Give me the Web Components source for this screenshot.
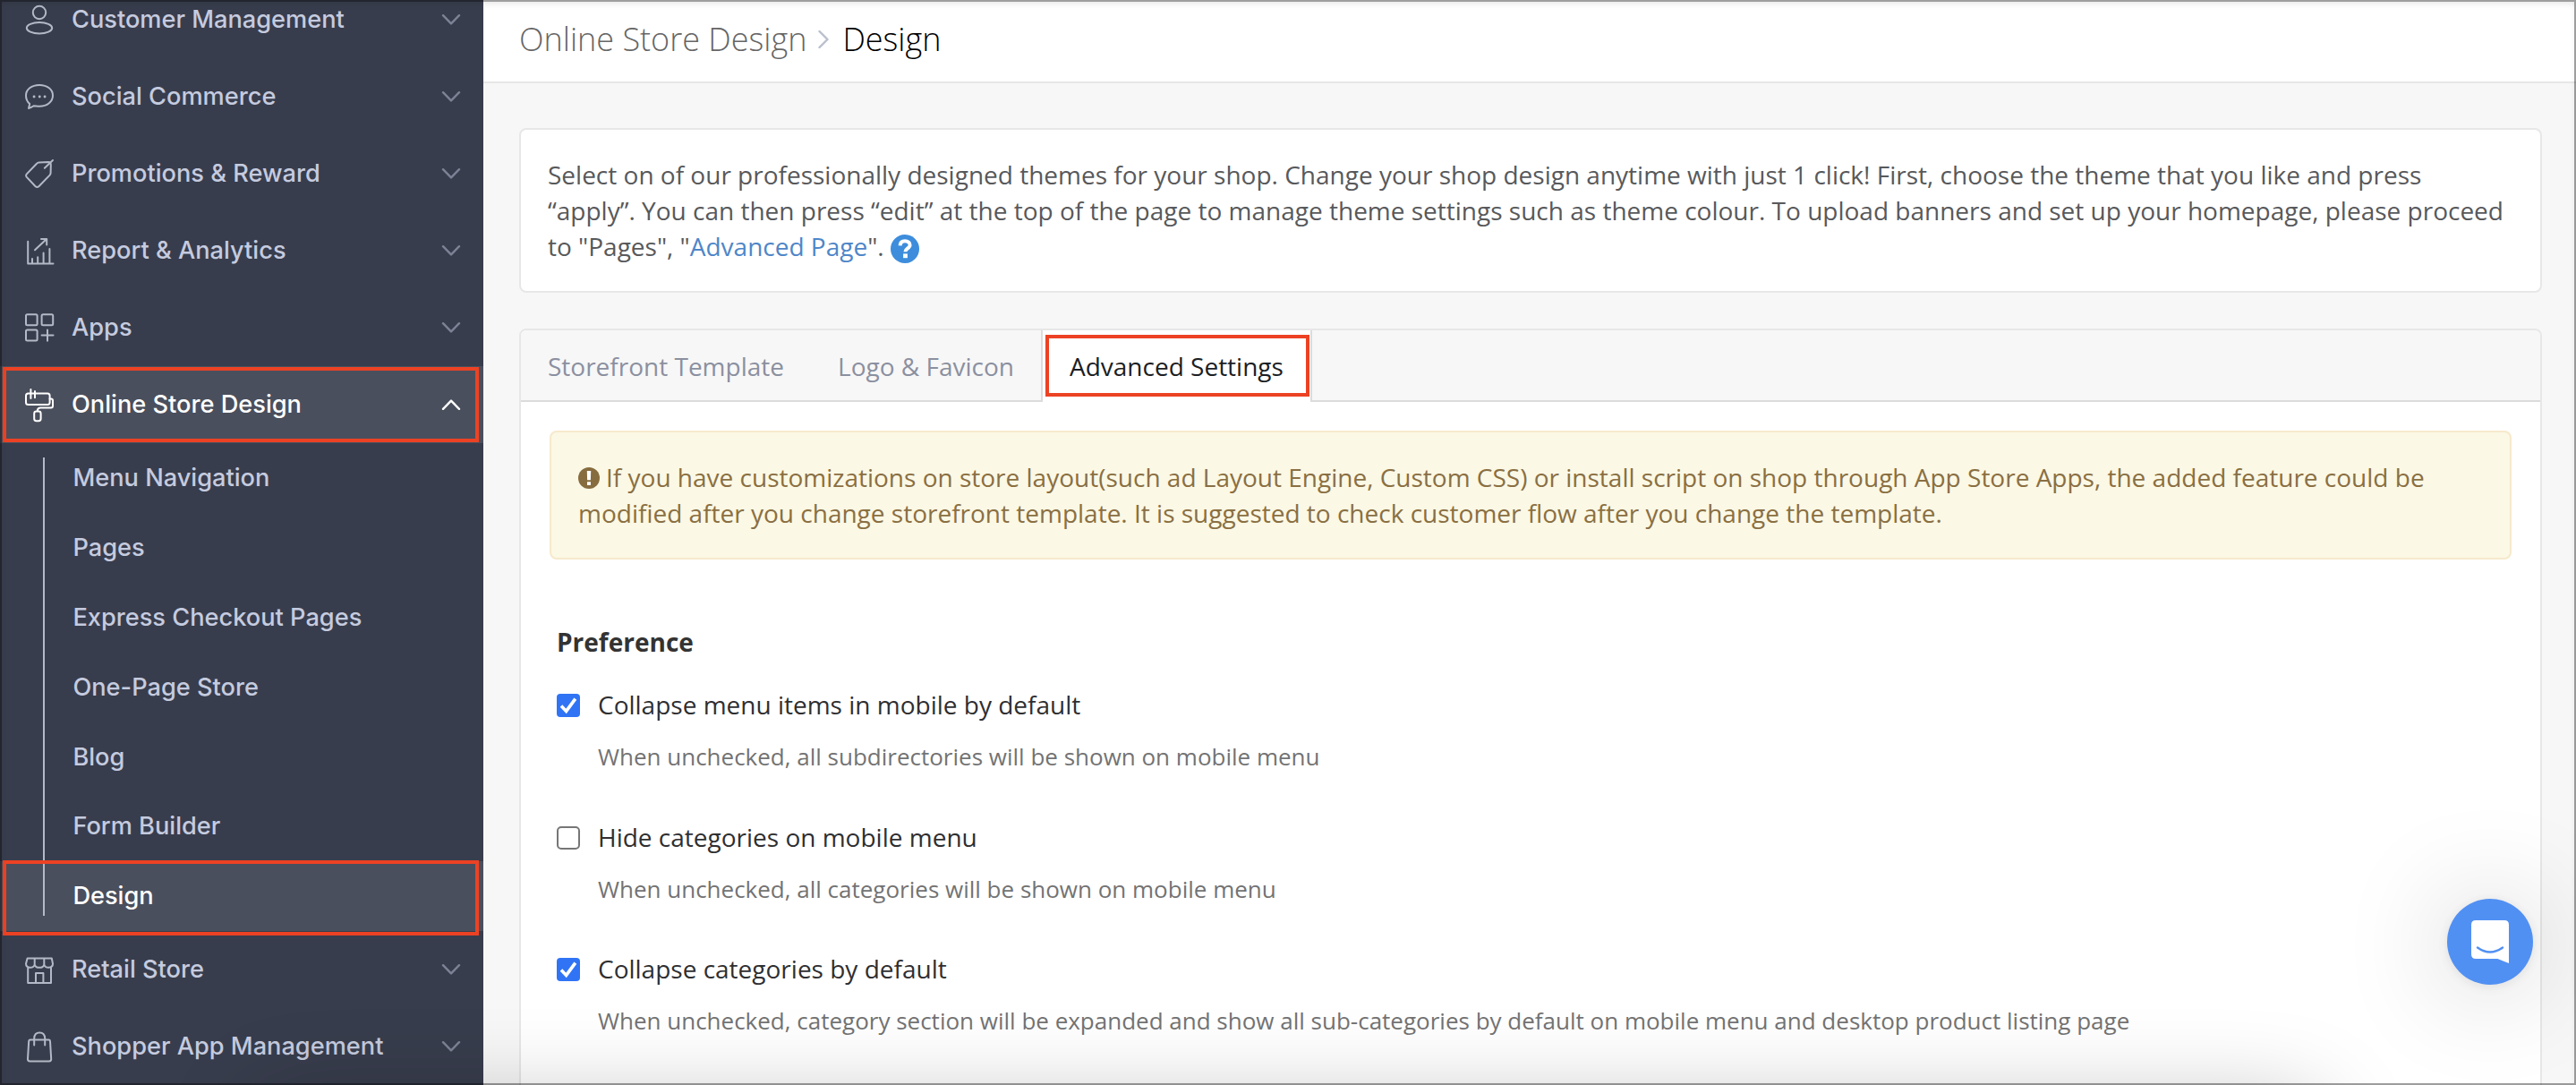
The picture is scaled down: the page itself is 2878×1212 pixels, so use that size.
<!DOCTYPE html>
<html lang="en">
<head>
<meta charset="utf-8">
<title>Design</title>
<style>
html,body{margin:0;height:100%;overflow:hidden;background:#f7f7f7}
</style>
</head>
<body>
<store-admin>
  <side-nav slot="nav">
    <nav-item icon="customer">Customer Management</nav-item>
    <nav-item icon="social">Social Commerce</nav-item>
    <nav-item icon="promo">Promotions &amp; Reward</nav-item>
    <nav-item icon="report">Report &amp; Analytics</nav-item>
    <nav-item icon="apps">Apps</nav-item>
    <nav-item icon="roller" open>Online Store Design</nav-item>
    <sub-nav>
      <sub-item>Menu Navigation</sub-item>
      <sub-item>Pages</sub-item>
      <sub-item>Express Checkout Pages</sub-item>
      <sub-item>One-Page Store</sub-item>
      <sub-item>Blog</sub-item>
      <sub-item>Form Builder</sub-item>
      <sub-item active>Design</sub-item>
    </sub-nav>
    <nav-item icon="store">Retail Store</nav-item>
    <nav-item icon="bag">Shopper App Management</nav-item>
  </side-nav>
  <crumb-bar slot="header"><span slot="parent">Online Store Design</span><span>Design</span></crumb-bar>
  <info-card></info-card>
  <tab-panel>
    <tab-item slot="tabs">Storefront Template</tab-item>
    <tab-item slot="tabs">Logo &amp; Favicon</tab-item>
    <tab-item slot="tabs" active>Advanced Settings</tab-item>
    <alert-box>If you have customizations on store layout(such ad Layout Engine, Custom CSS) or install script on shop through App Store Apps, the added feature could be modified after you change storefront template. It is suggested to check customer flow after you change the template.</alert-box>
    <pref-group heading="Preference">
      <pref-option checked>Collapse menu items in mobile by default<span slot="hint">When unchecked, all subdirectories will be shown on mobile menu</span></pref-option>
      <pref-option>Hide categories on mobile menu<span slot="hint">When unchecked, all categories will be shown on mobile menu</span></pref-option>
      <pref-option checked>Collapse categories by default<span slot="hint">When unchecked, category section will be expanded and show all sub-categories by default on mobile menu and desktop product listing page</span></pref-option>
    </pref-group>
  </tab-panel>
  <chat-button slot="float"></chat-button>
</store-admin>
<script>
const define = (name, html, setup) => customElements.define(name, class extends HTMLElement {
  connectedCallback() {
    if (this.shadowRoot) return;
    const t = document.createElement('template');
    t.innerHTML = html;
    this.attachShadow({mode: 'open'}).append(t.content.cloneNode(true));
    if (setup) setup(this, this.shadowRoot);
  }
});

const ICONS = {
  customer: '<circle cx="16" cy="12" r="7.2"/><ellipse cx="16" cy="29.3" rx="14.2" ry="6.2"/>',
  social: '<path d="M4 33L5.2 28C2.4 25.6 1 22.4 1 18.7C1 12 7.2 7 16 7S31 12 31 18.7S24.8 30.7 16 30.7C13.6 30.7 11.6 30.3 9.6 30.3C7.8 31.6 6 32.5 4 33Z"/><path d="M10 20h.1M16.2 20h.1M22 20h.1" stroke-width="2.8"/>',
  promo: '<path d="M15.5 7.6L26 7Q28.8 7 28.8 10L28.6 19Q28.6 20.4 27.6 21.6L15.6 34Q13.4 36 11.4 34L1.6 23.6Q0.4 22 1.6 20.6L13 8.8Q14 7.7 15.5 7.6Z"/><path d="M31 5L21.8 13.8"/>',
  report: '<path d="M3.2 9.8V34.6H31.5M8 29V34M14.2 27.3V34M20.6 22.6V34M27.4 18V34M11 19.2L24 7M18 7H24.2V13.6"/>',
  apps: '<rect x="1" y="5.2" width="12.6" height="12" rx="1.5"/><rect x="18.6" y="5.2" width="12.6" height="12" rx="1.5"/><rect x="1" y="22.6" width="12.6" height="12" rx="1.5"/><path d="M25 22.6V34.8M18.6 28.6H31.5"/>',
  roller: '<rect x="1" y="7.6" width="26.6" height="12.4" rx="2.5"/><path d="M6.4 3V13M11 5V12.2M27.6 13.4H29Q31 13.4 31 15.4V21.4Q31 23.4 29 23.4H17.4Q13.8 23.4 13.8 27"/><rect x="10.2" y="27.6" width="7.4" height="10.6" rx="2.4"/>',
  store: '<path d="M2.6 7.5H29.8L31 13.6C31 19 22.6 19 21.3 14.4C20 19 12 19 10.7 14.4C9.4 19 1 19 1 13.6ZM10.7 7.5V14.4M21.3 7.5V14.4M3.2 17.4V35.1H29V17.4M12 35V24H20.4V35"/>',
  bag: '<path d="M5.8 12.5H26.4Q27.9 12.5 28 14L29.2 34Q29.2 36.4 27 36.4H5.2Q3 36.4 3 34L4.2 14Q4.4 12.5 5.8 12.5ZM10.2 18.4V10.6Q10.6 4.4 16.2 4.4T22.2 10.6V18.4"/>'
};

define('store-admin', `<style>
:host{display:flex;position:relative;width:2878px;height:1212px;overflow:hidden;background:#f7f7f7;font:28px/40px "Open Sans",sans-serif}
.main{flex:1;min-width:0;display:flex;flex-direction:column}
.body{display:flex;flex-direction:column;gap:40px;padding:50px 38px 0 40px}
.shade{position:absolute;z-index:4;left:285px;width:2310px;top:1232px;height:300px;border-radius:40px;box-shadow:0 0 100px rgba(0,0,0,.25);pointer-events:none}
.frame{position:absolute;z-index:5;inset:0;border:2px solid rgba(0,0,0,.38);box-shadow:inset 0 4px 8px -3px rgba(0,0,0,.12);pointer-events:none}
</style><slot name="nav"></slot><div class="main"><slot name="header"></slot><div class="body"><slot></slot></div></div><slot name="float"></slot><div class="shade"></div><div class="frame"></div>`);

define('side-nav', `<style>
:host{display:flex;flex-direction:column;flex:none;width:540px;height:1233px;margin-top:-21px;background:#383d4d;font:450 27.2px/40px Inter,"Liberation Sans",sans-serif;color:#c5cbdf}
</style><slot></slot>`);

define('nav-item', `<style>
:host{display:flex;align-items:center;flex:none;position:relative;height:86px;padding:0 26px 0 28px;box-sizing:border-box}
:host([open]){background:#4a4f5d;color:#fff}
.ic{width:32px;height:40px;margin-right:20px;flex:none;overflow:visible;fill:none;stroke:#b3b9c6;stroke-width:2;stroke-linejoin:round;stroke-linecap:round}
.label{flex:1}
.ch{width:20px;height:12px;flex:none;overflow:visible;fill:none;stroke:#7c8395;stroke-width:2.4;stroke-linecap:round;stroke-linejoin:round}
:host([open]) svg{stroke:#fff}
:host([open]) .ch{transform:scaleY(-1)}
.mark{display:none;position:absolute;left:3px;right:5px;top:1px;bottom:1px;box-sizing:border-box;border:4px solid #ec4224}
:host([open]) .mark{display:block}
</style><svg class="ic" viewBox="0 0 32 40"></svg><span class="label"><slot></slot></span><svg class="ch" viewBox="0 0 20 12"><path d="M1 1.2L10 10.4L19 1.2"/></svg><div class="mark"></div>`,
(el, root) => { root.querySelector('.ic').innerHTML = ICONS[el.getAttribute('icon')]; });

define('sub-nav', `<style>
:host{display:flex;flex-direction:column;position:relative;flex:none}
.rail{position:absolute;z-index:1;left:48px;width:2px;top:16px;bottom:17px;background:#b5bac7}
</style><slot></slot><div class="rail"></div>`);

define('sub-item', `<style>
:host{display:flex;align-items:center;position:relative;height:77.9px;padding-left:81.4px}
:host([active]){background:#4a4f5d;color:#fff}
.mark{display:none;position:absolute;z-index:2;left:3px;right:5px;top:-1px;height:84px;box-sizing:border-box;border:4px solid #ec4224}
:host([active]) .mark{display:block}
</style><slot></slot><div class="mark"></div>`);

define('crumb-bar', `<style>
:host{display:flex;align-items:center;flex:none;height:93px;box-sizing:border-box;border-bottom:2px solid #e7e7e7;background:#fff;padding:0 40px 4px;font-size:36px;font-weight:300;color:#000}
.parent{color:#666}
svg{width:12px;height:20px;margin:0 15px 0 13px;fill:none;stroke:#b9bfcd;stroke-width:2.4;stroke-linecap:round;stroke-linejoin:round}
</style><span class="parent"><slot name="parent"></slot></span><svg viewBox="0 0 12 20"><path d="M1.5 1L10.5 10L1.5 19"/></svg><slot></slot>`);

define('info-card', `<style>
:host{display:block;background:#fff;border:2px solid #e7e7e7;border-radius:8px;padding:30px 40px 30px 30px;color:#58595b}
a{color:#4f86c8}
svg{width:32px;height:32px;vertical-align:middle;margin:-6px 0 -4px 0}
</style>Select on of our professionally designed themes for your shop. Change your shop design anytime with just 1 click! First, choose the theme that you like and press “apply”. You can then press “edit” at the top of the page to manage theme settings such as theme colour. To upload banners and set up your homepage, please proceed to "Pages", "<a>Advanced Page</a>". <svg viewBox="0 0 32 32"><circle cx="16" cy="16" r="16" fill="#3d8ddc"/><path d="M10.6 12.4C10.8 9 13 7.3 16.1 7.3C19.4 7.3 21.6 9.2 21.6 12C21.6 15.4 16.4 15.6 16.4 19.3" fill="none" stroke="#fff" stroke-width="4"/><rect x="14.1" y="21.4" width="4.8" height="4.8" fill="#fff"/></svg>`);

define('tab-panel', `<style>
:host{display:block;height:1000px;background:#fff;border:2px solid #e7e7e7;border-radius:8px}
.tabs{display:flex;height:80px;background:#f7f7f7;border-radius:6px 6px 0 0}
.rest{flex:1;border-bottom:2px solid #dcdcdc}
.content{padding:32px}
</style><div class="tabs"><slot name="tabs"></slot><div class="rest"></div></div><div class="content"><slot></slot></div>`);

define('tab-item', `<style>
:host{display:block;position:relative;box-sizing:border-box;height:80px;padding:20px 30px 18px;border-bottom:2px solid #dcdcdc;color:#8b90a0}
:host([active]){background:#fff;color:#1c1e24;border:solid #dcdcdc;border-width:0 2px}
.mark{display:none;position:absolute;left:3px;right:1px;top:5px;height:69px;box-sizing:border-box;border:4px solid #ec4224}
:host([active]) .mark{display:block}
</style><slot></slot><div class="mark"></div>`);

define('alert-box', `<style>
:host{display:block;background:#fbf8e5;border:2px solid #f6e9cc;border-radius:8px;padding:30px 40px 30px 30px;color:#8a6f42}
svg{width:24px;height:24px;vertical-align:-2px;margin-right:7px}
</style><svg viewBox="0 0 24 24"><circle cx="12" cy="12" r="12" fill="#876c3f"/><path d="M9.8 4H14.2L13.9 14.2H10.1ZM10 16.2H14V20H10Z" fill="#fff"/></svg><slot></slot>`);

define('pref-group', `<style>
:host{display:flex;flex-direction:column;padding:72px 8px 0;color:#333}
h3{margin:0 0 30px;font:inherit;font-weight:700}
</style><h3></h3><slot></slot>`,
(el, root) => { root.querySelector('h3').textContent = el.getAttribute('heading'); });

define('pref-option', `<style>
:host{display:flex;gap:20px;height:147.5px}
.box{flex:none;width:26px;height:26px;margin-top:8px;box-sizing:border-box;border:2px solid #767676;border-radius:5px;background:#fff}
:host([checked]) .box{border:0;background:#3074f5;border-radius:4px}
svg{display:none;width:26px;height:26px;fill:none;stroke:#fff;stroke-width:3.6}
:host([checked]) svg{display:block}
.text{display:flex;flex-direction:column;gap:18px;color:#2f2f31}
.hint{font-size:26px;color:#737373}
</style><span class="box"><svg viewBox="0 0 26 26"><path d="M5 13.6L10.6 19.4L20.8 5.6"/></svg></span><div class="text"><div><slot></slot></div><div class="hint"><slot name="hint"></slot></div></div>`);

define('chat-button', `<style>
:host{position:absolute;z-index:3;left:2734px;top:1004px;width:96px;height:96px;border-radius:50%;background:#5190f3;box-shadow:0 2px 12px rgba(0,0,0,.08),0 4px 120px rgba(0,0,0,.22)}
svg{display:block;width:96px;height:96px}
</style><svg viewBox="0 0 96 96"><path d="M32 24H64Q69 24 69 29V72L56.5 67H32Q27 67 27 62V29Q27 24 32 24Z" fill="#fff"/><path d="M34 54.5Q48 64.5 62 54.5" fill="none" stroke="#5190f3" stroke-width="2.4" stroke-linecap="round"/></svg>`);
</script>
</body>
</html>
